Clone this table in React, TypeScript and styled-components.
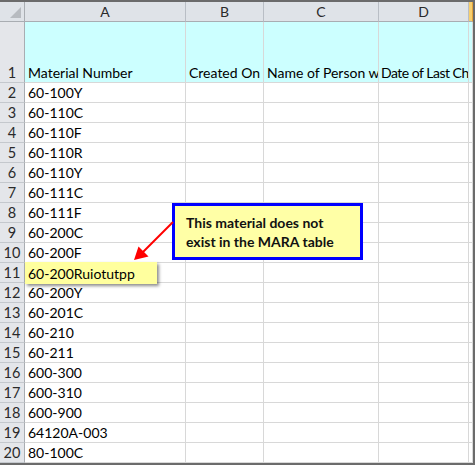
import React from "react";
import styled, { createGlobalStyle } from "styled-components";

const GlobalStyle = createGlobalStyle`
  html, body { margin: 0; padding: 0; background: #ffffff; }
  body { font-family: Lato, "Open Sans", sans-serif; }
`;

const Frame = styled.div`
  width: 475px;
  height: 465px;
  box-sizing: border-box;
  border-top: 2px solid #6b6b6b;
  border-right: 2px solid #6b6b6b;
  border-bottom: 2px solid #6b6b6b;
  overflow: hidden;
`;

const Sheet = styled.div`
  position: relative;
  display: grid;
  grid-template-columns: 25px 161px 78px 115px 90px 1fr;
  grid-template-rows: 20px 61px repeat(19, 20px);
`;

const Cell = styled.div<{ $fill?: string; $tight?: boolean }>`
  box-sizing: border-box;
  border-right: 1px solid #d8d8d8;
  border-bottom: 1px solid #d8d8d8;
  background: ${(p) => p.$fill || "#ffffff"};
  font-size: 14px;
  letter-spacing: ${(p) => (p.$tight ? "-0.5px" : "0")};
  color: #000;
  padding: 0 0 1px ${(p) => (p.$tight ? "2px" : "3px")};
  display: flex;
  align-items: flex-end;
  white-space: nowrap;
  overflow: hidden;
  line-height: 17px;
`;

const ColHead = styled.div<{ $sel?: boolean }>`
  box-sizing: border-box;
  background: ${(p) => (p.$sel ? "#f7cf6e" : "#dfe3e8")};
  border-right: 1px solid ${(p) => (p.$sel ? "#e2a33a" : "#b9bec5")};
  border-bottom: 1px solid #a9adb2;
  display: flex;
  align-items: center;
  justify-content: center;
  font-size: 14px;
  color: #2a2a2a;
`;

const Corner = styled.div`
  position: relative;
  box-sizing: border-box;
  background: #dfe3e8;
  border-right: 1px solid #a9adb2;
  border-bottom: 1px solid #a9adb2;
  &::after {
    content: "";
    position: absolute;
    right: 3px;
    bottom: 3px;
    width: 0;
    height: 0;
    border-left: 11px solid transparent;
    border-bottom: 11px solid #b7bbc0;
  }
`;

const RowHead = styled.div`
  box-sizing: border-box;
  background: #e4e6ea;
  border-right: 1px solid #a9adb2;
  border-bottom: 1px solid #c4c8cd;
  display: flex;
  align-items: flex-end;
  justify-content: center;
  padding-bottom: 1px;
  font-size: 14.5px;
  line-height: 17px;
  color: #2a2a2a;
`;

const Callout = styled.div`
  position: absolute;
  left: 172px;
  top: 201px;
  width: 191px;
  height: 57px;
  box-sizing: border-box;
  border: 3px solid #0000ff;
  background: #ffffa6;
  padding: 7px 0 0 11px;
  font-weight: 700;
  font-size: 14px;
  line-height: 19px;
  color: #111;
`;

const Note = styled.div`
  position: absolute;
  left: 25px;
  top: 260px;
  width: 132px;
  height: 22px;
  box-sizing: border-box;
  background: #ffff9e;
  box-shadow: 2px 2px 3px rgba(0, 0, 0, 0.45);
  padding: 3px 0 0 3px;
  font-size: 14px;
  line-height: 17px;
  color: #000;
`;

const ArrowLayer = styled.svg`
  position: absolute;
  left: 0;
  top: 0;
  pointer-events: none;
`;

const headerTexts = ["Material Number", "Created On", "Name of Person w", "Date of Last Ch", ""];

const materials = [
  "60-100Y",
  "60-110C",
  "60-110F",
  "60-110R",
  "60-110Y",
  "60-111C",
  "60-111F",
  "60-200C",
  "60-200F",
  "",
  "60-200Y",
  "60-201C",
  "60-210",
  "60-211",
  "600-300",
  "600-310",
  "600-900",
  "64120A-003",
  "80-100C",
];

export default function App() {
  return (
    <>
      <GlobalStyle />
      <Frame>
        <Sheet>
          <Corner />
          <ColHead>A</ColHead>
          <ColHead>B</ColHead>
          <ColHead>C</ColHead>
          <ColHead>D</ColHead>
          <ColHead $sel />

          <RowHead>1</RowHead>
          {headerTexts.map((t, i) => (
            <Cell key={"h" + i} $fill="#ccffff" $tight={i === 3}>
              {t}
            </Cell>
          ))}

          {materials.map((m, r) => (
            <React.Fragment key={"r" + r}>
              <RowHead>{r + 2}</RowHead>
              <Cell>{m}</Cell>
              <Cell />
              <Cell />
              <Cell />
              <Cell />
            </React.Fragment>
          ))}

          <Note>60-200Ruiotutpp</Note>
          <Callout>
            This material does not
            <br />
            exist in the MARA table
          </Callout>
          <ArrowLayer width="475" height="461" viewBox="0 0 475 461">
            <line x1="173" y1="220" x2="142" y2="251" stroke="#ff0000" strokeWidth="2" />
            <polygon points="134,258 138.5,244.5 148.5,254.5" fill="#ff0000" />
          </ArrowLayer>
        </Sheet>
      </Frame>
    </>
  );
}
